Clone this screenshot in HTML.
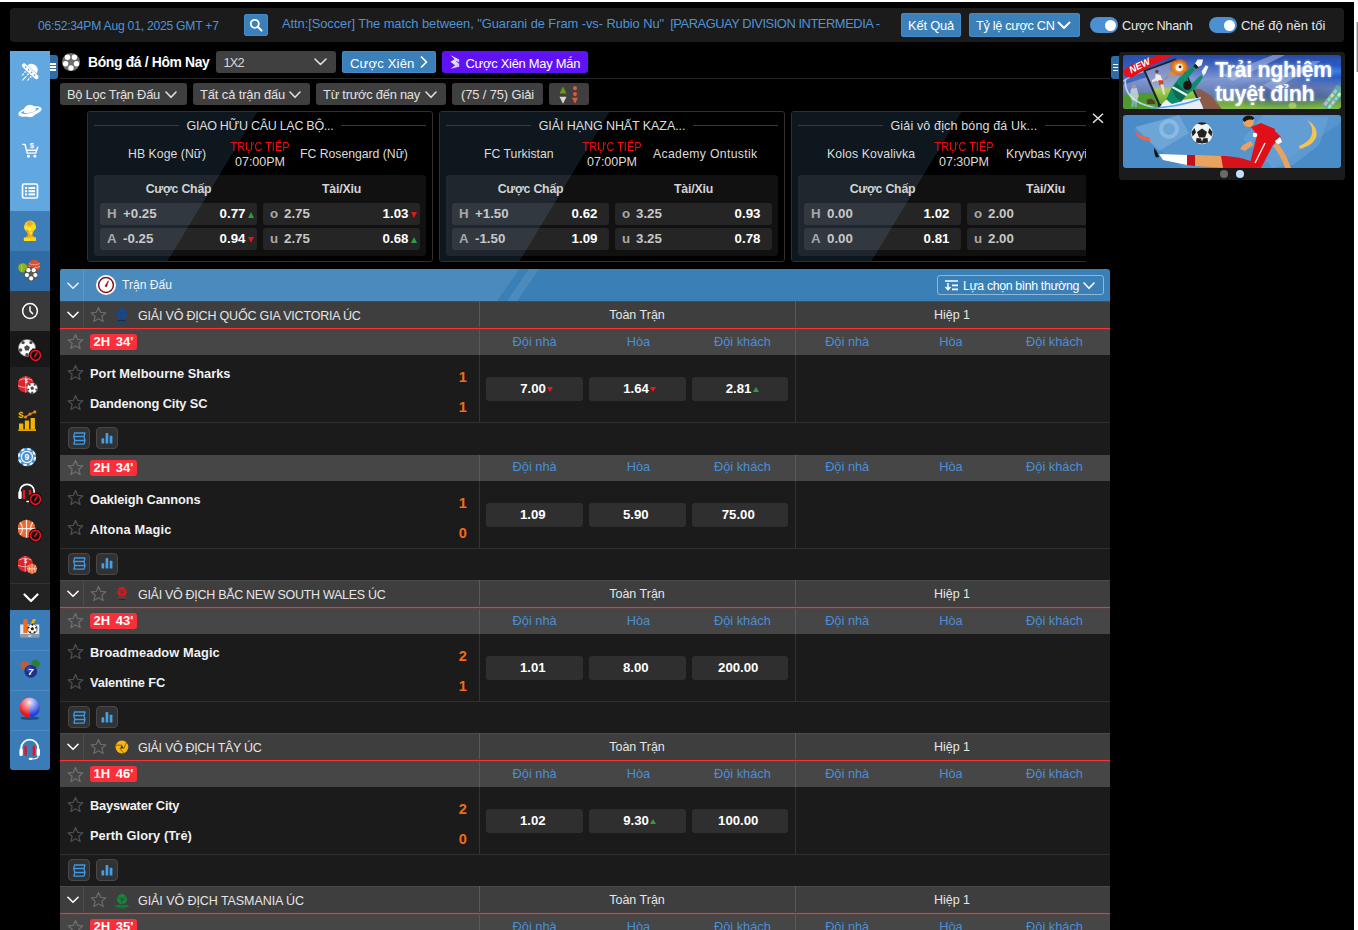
<!DOCTYPE html>
<html lang="vi">
<head>
<meta charset="utf-8">
<title>Bóng đá / Hôm Nay</title>
<style>
*{box-sizing:border-box;margin:0;padding:0}
html,body{width:1358px;height:930px;overflow:hidden;background:#fff}
body{font-family:"Liberation Sans",sans-serif;font-size:13px;color:#e6e6e6;position:relative}
#app{position:absolute;left:0;top:2px;width:1354px;height:928px;background:#000;overflow:hidden}
#sb{position:absolute;left:1356px;top:22px;width:2px;height:50px;background:linear-gradient(90deg,#d0d0d0 0,#d0d0d0 1px,#8c8c8c 1px,#8c8c8c 2px)}
.abs{position:absolute}
.t{position:absolute;white-space:nowrap;line-height:1}
/* top bar */
#top{position:absolute;left:10px;top:6px;width:1334px;height:34px;background:#1b1b1b;border-radius:4px}
.blue{color:#4e94d5}
.btn{position:absolute;border-radius:3px;background:#3b80b9;color:#fff;box-shadow:inset 0 0 0 1px #438acb}
.gbtn{position:absolute;border-radius:3px;background:#3f3f3f;color:#e2e2e2}
.tog{position:absolute;width:28px;height:16px;border-radius:8px;background:#4a90d2}
.tog i{position:absolute;right:2.500px;top:2.500px;width:11px;height:11px;border-radius:50%;background:#fff}
/* sidebar */
#side{position:absolute;left:10px;top:49px;width:40px;height:719px;border-radius:0 0 3px 3px;overflow:hidden;background:#222}
#side .it{position:absolute;left:0;width:40px;height:40px}
#side svg{position:absolute;left:8px;top:8px;width:24px;height:24px}

/* rows */
.chev{position:absolute}
#r2 .t,#r3 .t{font-size:13px}
.card{position:absolute;top:109px;width:346px;height:151px;border:1px solid #303030;border-radius:3px;overflow:hidden;background:#000}
.card .dg{position:absolute;left:-1px;top:-1px;width:172px;height:151px;background:#0f171e;clip-path:polygon(0 0,171px 0,80px 151px,0 151px)}
.card .ttl{position:absolute;left:0;top:6.500px;width:100%;text-align:center;font-size:12.500px;color:#dedede;line-height:15px;white-space:nowrap}
.card .ln{position:absolute;top:13px;height:1px;background:#3a3a3a}
.card .tm{position:absolute;top:34.500px;font-size:12.250px;color:#dcdcdc;line-height:15px;white-space:nowrap;text-align:center}
.card .live{position:absolute;left:0;width:100%;text-align:center;top:28px;font-size:12.500px;line-height:14px;color:#fa0a10;white-space:nowrap;transform:scaleX(.875)}
.card .time{position:absolute;left:0;width:100%;text-align:center;top:43px;font-size:12.500px;line-height:14px;color:#dcdcdc;white-space:nowrap}
.card .box{position:absolute;left:6px;top:63px;width:332px;height:81px;border-radius:3px;background:rgba(255,255,255,.065)}
.card .h{position:absolute;top:6.500px;font-size:12.300px;font-weight:700;color:#d4d4d4;line-height:15px;width:157px;text-align:center;white-space:nowrap;letter-spacing:-.2px}
.od{position:absolute;width:157px;height:22px;border-radius:3px;background:rgba(255,255,255,.085);font-size:13.300px;font-weight:700;line-height:22px;white-space:nowrap}
.od b{position:absolute;left:7px;color:#a8a8a8}
.od u{position:absolute;left:23px;color:#c8c8c8;text-decoration:none}
.od s{position:absolute;right:11.500px;color:#fff;text-decoration:none}
.od .up,.od .dn{position:absolute;right:3.300px;top:8.500px;width:0;height:0;border-left:3.500px solid transparent;border-right:3.500px solid transparent}
.od .up{border-bottom:6px solid #2e9e3e}
.od .dn{border-top:6px solid #e8131d}

/* table */
#th{position:absolute;left:60px;top:267px;width:1050px;height:32px;background:#3a80b6;border-radius:3px 3px 0 0;overflow:hidden}
#th .lg{position:absolute;left:0;top:0;width:460px;height:32px;background:#4b8abd;clip-path:polygon(0 0,459.500px 0,437px 32px,0 32px)}
#th .st{position:absolute;left:447px;top:0;width:40px;height:32px;background:#4b8abd;clip-path:polygon(22px 0,32px 0,10px 32px,0 32px)}
.lrow{position:absolute;left:60px;width:1050px;height:29px;z-index:2;background:linear-gradient(#4a4a4a 0,#4a4a4a 1px,#3e3e3e 1px,#3e3e3e 26px,#4a3c3c 26px,#4a3c3c 27px,#fa3232 27px,#fa3232 28px,#5c4343 28px,#5c4343 29px)}
.lrow .nm{position:absolute;left:78px;top:8px;font-size:12.500px;letter-spacing:-.2px;color:#e6e6e6;white-space:nowrap;line-height:14px}
.lrow .ct{position:absolute;top:7px;font-size:12.500px;color:#e6e6e6;white-space:nowrap;line-height:14px;width:100px;text-align:center}
.vd{position:absolute;top:0;width:1px;height:100%;background:#5a5a5a}
.lrow .vd{height:26px}
.mb{position:absolute;left:60px;width:1050px;height:126.500px;background:#1b1b1b}
.mb .tr{position:absolute;left:0;top:0;width:1050px;height:26px;background:#464646}
.mb .ch{position:absolute;top:5.500px;width:104px;text-align:center;font-size:12.800px;color:#4a8fd6;line-height:14px;white-space:nowrap}
.mb .bd{position:absolute;left:30px;top:5px;width:47px;height:16px;border-radius:3px;background:#fb2f39;color:#fff;font-weight:700;font-size:13px;line-height:16px;text-align:center;white-space:nowrap;word-spacing:2px}
.mb .tn{position:absolute;left:30px;font-size:12.800px;font-weight:700;color:#f2f2f2;white-space:nowrap;line-height:16px}
.mb .sc{position:absolute;left:392.800px;width:20px;text-align:center;font-size:14.500px;font-weight:700;color:#f26b14;line-height:16px}
.mb .oc{position:absolute;top:48px;width:97px;height:24px;border-radius:3px;background:#2f2f2f;color:#fff;font-weight:700;font-size:13.200px;line-height:24px;text-align:center;white-space:nowrap;padding-right:3.500px}
.mb .oc i{display:inline-block;width:0;height:0;border-left:3.300px solid transparent;border-right:3.300px solid transparent;margin-left:1.500px;margin-right:-8.100px;vertical-align:1px}
.mb .oc i.up{border-bottom:5.500px solid #2e9e3e}
.mb .oc i.dn{border-top:5.500px solid #f0141e}
.mb .hl{position:absolute;left:0;top:93px;width:1050px;height:1px;background:#303030}
.mb .v1{position:absolute;left:419px;top:26px;width:1px;height:67px;background:#333}
.mb .v2{position:absolute;left:735px;top:26px;width:1px;height:67px;background:#333}
.ib{position:absolute;top:98px;width:22px;height:22px;border:1px solid #484848;border-radius:4px;background:#323232}
.star{position:absolute;width:17px;height:17px}
</style>
</head>
<body>
<div id="sb"></div>
<div id="app">

<!-- TOP BAR -->
<div id="top">
  <span class="t blue" id="clock" style="letter-spacing:-0.259px;left:28px;top:11.500px;font-size:12.200px">06:52:34PM Aug 01, 2025 GMT +7</span>
  <div class="btn" style="left:234px;top:6px;width:24px;height:22px">
    <svg class="abs" style="left:5px;top:4px" width="14" height="14" viewBox="0 0 14 14"><circle cx="5.8" cy="5.8" r="4" fill="none" stroke="#fff" stroke-width="1.8"/><path d="M8.8 8.8 L12.6 12.6" stroke="#fff" stroke-width="2" stroke-linecap="round"/></svg>
  </div>
  <span class="t blue" id="marq" style="letter-spacing:-0.069px;left:272px;top:10px;font-size:12.900px">Attn:[Soccer] The match between, "Guarani de Fram -vs- Rubio Nu"</span><span class="t blue" id="marq2" style="letter-spacing:-0.451px;left:660.200px;top:10px;font-size:12.900px">[PARAGUAY DIVISION INTERMEDIA -</span>
  <div class="btn" style="left:891px;top:5px;width:60px;height:24px"><span class="t" id="kq" style="letter-spacing:-0.185px;left:7px;top:6.500px;font-size:12.900px">Kết Quả</span></div>
  <div class="btn" style="left:959px;top:5px;width:111px;height:24px"><span class="t" id="tl" style="letter-spacing:-0.298px;left:7px;top:6.500px;font-size:12.700px">Tỷ lệ cược CN</span>
    <svg class="abs" style="left:88px;top:8px" width="14" height="9" viewBox="0 0 14 9"><path d="M1.5 1.5 L7 7 L12.5 1.5" fill="none" stroke="#fff" stroke-width="2" stroke-linecap="round" stroke-linejoin="round"/></svg>
  </div>
  <div class="tog" style="left:1080px;top:9px"><i></i></div>
  <span class="t" id="cn" style="letter-spacing:-0.273px;left:1112px;top:11.800px;font-size:12.700px;color:#e8e8e8">Cược Nhanh</span>
  <div class="tog" style="left:1199px;top:9px"><i></i></div>
  <span class="t" id="cd" style="left:1231px;top:11.800px;font-size:12.96px;color:#e8e8e8">Chế độ nền tối</span>
</div>

<!-- SIDEBAR -->
<div id="side">
  <div class="it" style="top:0;background:#61a7e0">
    <svg viewBox="0 0 24 24"><g transform="rotate(43 12.600 11.700)"><path d="M6.600 9.700a6.300 6.300 0 0 1 12.400 0z" fill="#fff"/><rect x="2.200" y="10.100" width="21" height="4.500" rx="2.250" fill="#fff"/><g fill="#61a7e0"><circle cx="6.500" cy="12.350" r=".85"/><circle cx="10.500" cy="12.350" r=".85"/><circle cx="14.500" cy="12.350" r=".85"/><circle cx="18.500" cy="12.350" r=".85"/></g><path d="M8.300 15.500l1.200 2.200 1.200-2.200zM12 15.500l1.200 2.200 1.200-2.200zM15.700 15.500l1.200 2.200 1.200-2.200z" fill="#fff"/><g stroke="#fff" stroke-width="1.100" stroke-linecap="round"><path d="M9.500 18.800v1.800M13.200 18.800v5.200M16.900 18.800v1.800"/></g></g></svg>
  </div>
  <div class="it" style="top:40px;background:#61a7e0">
    <svg viewBox="0 0 24 24"><g fill="none" stroke="#fff"><ellipse cx="12" cy="12.500" rx="11" ry="3.600" transform="rotate(-14 12 12.500)" stroke-width="1.800"/></g><circle cx="12" cy="12" r="6.200" fill="#fff"/><path d="M4.500 13.800c3 2.200 11 .8 15-2.800" fill="none" stroke="#61a7e0" stroke-width="1.600"/><path d="M2 14.500c3 3 15 .5 20-4.500" fill="none" stroke="#fff" stroke-width="1.800" stroke-linecap="round"/></svg>
  </div>
  <div class="it" style="top:80px;background:#61a7e0">
    <svg viewBox="0 0 24 24"><g transform="translate(1.700 -.6) scale(.92)"><g fill="none" stroke="#fff" stroke-width="1.600" stroke-linecap="round" stroke-linejoin="round"><path d="M3.500 6.500h2.300l2.400 9.500h9.300l2-6.500"/><path d="M8 13h10"/></g><circle cx="9.500" cy="19.500" r="1.600" fill="#fff"/><circle cx="16.500" cy="19.500" r="1.600" fill="#fff"/><text x="13.300" y="10.500" font-size="8.500" font-weight="700" fill="#fff" text-anchor="middle" font-family="Liberation Sans,sans-serif">$</text></g></svg>
  </div>
  <div class="it" style="top:120px;background:#61a7e0">
    <svg viewBox="0 0 24 24"><rect x="4.500" y="5" width="15" height="14" rx="1.500" fill="none" stroke="#fff" stroke-width="1.700"/><g fill="#fff"><rect x="7" y="8" width="2" height="2"/><rect x="10.500" y="8" width="6.500" height="2"/><rect x="7" y="11.200" width="2" height="2"/><rect x="10.500" y="11.200" width="6.500" height="2"/><rect x="7" y="14.400" width="2" height="2"/><rect x="10.500" y="14.400" width="6.500" height="2"/></g></svg>
  </div>
  <div class="it" style="top:160px;background:#3d7db8">
    <svg viewBox="0 0 24 24"><path d="M8.300 11.500 10 17.500h4.200l1.700-6z" fill="#f0a51e"/><path d="M10.500 12 13 17 14.500 12.500z" fill="#ffe530"/><circle cx="12.100" cy="7.400" r="5.800" fill="#f7c81c"/><path d="M10 2.300l3 .2 1 3-2.500 1.500L9 5.500z" fill="#f0a51e"/><path d="M13.500 6.500l3.300-.8 1 3.500-2.300 2.300-2.500-1.500z" fill="#ffe21a"/><path d="M6.800 6l2.500 1.500.2 3L7 11.300 6.300 8.500z" fill="#ffe530"/><path d="M9.800 8l3 .5.700 2.700-2.500 1.500-2-1.700z" fill="#fff03a"/><path d="M7 11.300l2.500-.8 2 1.700-.5 1-2.500-.3z" fill="#f0a51e"/><path d="M8.500 17.300h7.200l1 1.300H7.500z" fill="#f5c21a"/><rect x="5.800" y="18.500" width="12.200" height="3.400" rx=".5" fill="#ffe01a"/><rect x="12" y="18.500" width="6" height="3.400" rx=".5" fill="#fcd20e"/></svg>
  </div>
  <div class="it" style="top:200px;background:#2f6ca6">
    <svg viewBox="0 0 24 24"><circle cx="4.800" cy="8.800" r="4.600" fill="#8ab317"/><path d="M3 5.500c1.500 2 1.500 5 0 7" stroke="#c5dc7a" stroke-width=".7" fill="none"/><circle cx="16.200" cy="6.800" r="6" fill="#d9512c"/><path d="M11 4.500c3 1.800 7.500 1.800 10.500 0M10.500 7.500c3 1.500 8.500 1.500 11.500 0" stroke="#f3b9a6" stroke-width=".8" fill="none"/><circle cx="13.1" cy="14.8" r="7" fill="#5a5a5a"/><circle cx="10.41" cy="11.18" r="2.08" fill="#fff"/><circle cx="15.72" cy="11.18" r="2.08" fill="#fff"/><circle cx="8.95" cy="16.11" r="2.08" fill="#fff"/><circle cx="17.33" cy="16.11" r="2.08" fill="#fff"/><circle cx="13.10" cy="19.42" r="2.08" fill="#fff"/></svg>
  </div>
  <div class="it" style="top:240px;background:#3a3a3a">
    <svg viewBox="0 0 24 24"><circle cx="12" cy="12" r="7.400" fill="none" stroke="#fff" stroke-width="1.500"/><path d="M12 7.800V12l2.600 2.600" fill="none" stroke="#fff" stroke-width="1.500" stroke-linecap="round" stroke-linejoin="round"/></svg>
  </div>
  <div class="it" style="top:280px;height:36px;background:#181818">
    <svg viewBox="0 0 26 26" style="left:8px;top:5px;width:26px;height:26px"><circle cx="9" cy="12" r="8.5" fill="#fafafa" stroke="#777" stroke-width=".700"/><g fill="#4a4a4a"><path d="M9.00 9.00L11.90 11.10L10.80 14.50L7.20 14.50L6.10 11.10z"/><circle cx="12.94" cy="6.58" r="1.70"/><circle cx="15.37" cy="14.07" r="1.70"/><circle cx="9.00" cy="18.70" r="1.70"/><circle cx="2.63" cy="14.07" r="1.70"/><circle cx="5.06" cy="6.58" r="1.70"/></g><circle cx="17.500" cy="19.300" r="6.800" fill="#0c0c0c"/><circle cx="17.500" cy="19.300" r="5" fill="none" stroke="#f0141e" stroke-width="1.700"/><path d="M16.800 20.300l2.300-3.400" stroke="#f0141e" stroke-width="1.600" stroke-linecap="round"/></svg>
  </div>
  <div class="it" style="top:316px;height:36px;background:#222">
    <svg viewBox="0 0 26 26" style="left:8px;top:5px;width:26px;height:26px"><circle cx="7.8" cy="12.4" r="8.2" fill="#d8262c"/><path d="M1.24 8.30q6.56 -3.28 13.12 0M0.01 13.63q7.79 3.69 15.58 0M7.8 4.200000000000001v16.4" stroke="#f7c1bd" stroke-width=".800" fill="none"/><text x="8.3" y="11.4" font-size="5" font-weight="700" fill="#fff" text-anchor="middle" font-family="Liberation Sans,sans-serif">$</text><circle cx="14.2" cy="16.2" r="5.4" fill="#fafafa" stroke="#555" stroke-width=".700"/><g fill="#4a4a4a"><path d="M14.20 14.29L16.04 15.63L15.34 17.79L13.06 17.79L12.36 15.63z"/><circle cx="16.70" cy="12.76" r="1.08"/><circle cx="18.25" cy="17.52" r="1.08"/><circle cx="14.20" cy="20.46" r="1.08"/><circle cx="10.15" cy="17.52" r="1.08"/><circle cx="11.70" cy="12.76" r="1.08"/></g></svg>
  </div>
  <div class="it" style="top:352px;height:36px;background:#222">
    <svg viewBox="0 0 26 26" style="left:8px;top:5px;width:26px;height:26px"><g fill="#f5b400"><rect x="1" y="15.500" width="4.300" height="6"/><rect x="6.800" y="12.500" width="4.300" height="9"/><rect x="12.600" y="10" width="4.300" height="11.500"/><rect x=".3" y="21.300" width="17.700" height="1.600"/></g><path d="M7.500 9 12 6 17 3.800" stroke="#e8841a" stroke-width="1.300" fill="none"/><g fill="#e8841a"><circle cx="7.500" cy="9" r="1.600"/><circle cx="12" cy="6" r="1.600"/><circle cx="16.800" cy="3.900" r="1.600"/></g><text x="3" y="10" font-size="9.500" font-weight="700" fill="#f5b400" text-anchor="middle" font-family="Liberation Sans,sans-serif">$</text></svg>
  </div>
  <div class="it" style="top:388px;height:36px;background:#222">
    <svg viewBox="0 0 26 26" style="left:8px;top:5px;width:26px;height:26px"><circle cx="8.900" cy="13" r="9.300" fill="#4a90d2"/><circle cx="8.900" cy="13" r="8.100" fill="none" stroke="#eaf2fb" stroke-width="2" stroke-dasharray="3.400 3"/><circle cx="8.900" cy="13" r="6.200" fill="#f4f8fc"/><circle cx="8.900" cy="13" r="4.900" fill="#4a90d2"/><text x="8.900" y="16" font-size="8.500" font-weight="700" fill="#fff" text-anchor="middle" font-family="Liberation Sans,sans-serif">9</text></svg>
  </div>
  <div class="it" style="top:424px;height:36px;background:#222">
    <svg viewBox="0 0 26 26" style="left:8px;top:5px;width:26px;height:26px"><path d="M1.800 15V11.500a7.200 7.200 0 0 1 14.400 0V14" fill="none" stroke="#fff" stroke-width="1.700"/><rect x=".3" y="11" width="3.400" height="8" rx="1.500" fill="#fff"/><rect x="4.800" y="10" width="2.200" height="9" fill="#f0141e"/><rect x="11" y="10" width="2.200" height="5" fill="#f0141e"/><path d="M9 21.500h2" stroke="#fff" stroke-width="1.500" stroke-linecap="round"/><circle cx="17.500" cy="19.300" r="6.800" fill="#0c0c0c"/><circle cx="17.500" cy="19.300" r="5" fill="none" stroke="#f0141e" stroke-width="1.700"/><path d="M16.800 20.300l2.300-3.400" stroke="#f0141e" stroke-width="1.600" stroke-linecap="round"/></svg>
  </div>
  <div class="it" style="top:460px;height:36px;background:#222">
    <svg viewBox="0 0 26 26" style="left:8px;top:5px;width:26px;height:26px"><circle cx="8.5" cy="12.7" r="9" fill="#ea6a36"/><path d="M-0.5 12.7h18M8.5 3.6999999999999993v18M2.20 6.40q4.50 6.30 0 12.60M14.80 6.40q-4.50 6.30 0 12.60" stroke="#fde6da" stroke-width="1.17" fill="none"/><circle cx="17.500" cy="19.300" r="6.800" fill="#0c0c0c"/><circle cx="17.500" cy="19.300" r="5" fill="none" stroke="#f0141e" stroke-width="1.700"/><path d="M16.800 20.300l2.300-3.400" stroke="#f0141e" stroke-width="1.600" stroke-linecap="round"/></svg>
  </div>
  <div class="it" style="top:496px;height:36px;background:#222">
    <svg viewBox="0 0 26 26" style="left:8px;top:5px;width:26px;height:26px"><circle cx="7.2" cy="11.9" r="7.8" fill="#d8262c"/><path d="M0.96 8.00q6.24 -3.12 12.48 0M-0.21 13.07q7.41 3.51 14.82 0M7.2 4.1000000000000005v15.6" stroke="#f7c1bd" stroke-width=".800" fill="none"/><text x="7.7" y="10.9" font-size="5" font-weight="700" fill="#fff" text-anchor="middle" font-family="Liberation Sans,sans-serif">$</text><circle cx="14" cy="16.8" r="5" fill="#ea6a36"/><path d="M9 16.8h10M14 11.8v10M10.50 13.30q2.50 3.50 0 7.00M17.50 13.30q-2.50 3.50 0 7.00" stroke="#fde6da" stroke-width="0.70" fill="none"/></svg>
  </div>
  <div class="it" style="top:532px;height:27px;background:#222;border-top:1px solid #333">
    <svg viewBox="0 0 16 10" style="left:13px;top:9px;width:16px;height:10px"><path d="M1.500 1.500 8 8 14.500 1.500" fill="none" stroke="#fff" stroke-width="2.200" stroke-linecap="round" stroke-linejoin="round"/></svg>
  </div>
  <div class="it" style="top:559px;background:#3a7cb8">
    <svg viewBox="0 0 24 24" style="left:7.300px;top:6.300px;width:25.400px;height:25.400px"><rect x="3" y="8" width="18" height="11" fill="#dfe6ee"/><rect x="3" y="17" width="18" height="3.500" fill="#8e9aa8"/><rect x="10.500" y="18.400" width="3" height=".9" fill="#fff"/><path d="M6 3h4v13H6z" fill="#f26a1b"/><path d="M10 12 15 3h3l-5 9z" fill="#f7b500"/><circle cx="14.500" cy="12" r="4.500" fill="#fff" stroke="#333" stroke-width=".7"/><g fill="#222"><path d="M14.500 10.300l1.600 1.200-.6 1.900h-2l-.6-1.900z"/><circle cx="14.500" cy="8.300" r=".9"/><circle cx="11" cy="11" r=".9"/><circle cx="18" cy="11" r=".9"/><circle cx="12.400" cy="15.300" r=".9"/><circle cx="16.600" cy="15.300" r=".9"/></g></svg>
  </div>
  <div class="it" style="top:599px;background:#3a7cb8;box-shadow:inset 0 1px 0 rgba(255,255,255,.1)">
    <svg viewBox="0 0 24 24" style="left:7.300px;top:6.300px;width:25.400px;height:25.400px"><circle cx="7.500" cy="9" r="4.300" fill="#b5623a"/><circle cx="17.500" cy="7.500" r="4" fill="#2e7d32"/><circle cx="13" cy="14.500" r="6" fill="#1e2f8f"/><circle cx="11.500" cy="12.500" r="2.500" fill="#3d52c4" opacity=".7"/><text x="13" y="18" font-size="9" font-weight="700" fill="#fff" text-anchor="middle" font-family="Liberation Sans,sans-serif" font-style="italic">7</text></svg>
  </div>
  <div class="it" style="top:639px;background:#3a7cb8;box-shadow:inset 0 1px 0 rgba(255,255,255,.1)">
    <svg viewBox="0 0 24 24" style="left:7.300px;top:6.300px;width:25.400px;height:25.400px"><defs><radialGradient id="gl" cx=".5" cy=".25" r=".6"><stop offset="0" stop-color="#fff" stop-opacity=".9"/><stop offset="1" stop-color="#fff" stop-opacity="0"/></radialGradient><clipPath id="cb"><circle cx="12" cy="11" r="9.500"/></clipPath></defs><ellipse cx="12" cy="21" rx="9" ry="1.600" fill="#1d4e80"/><g clip-path="url(#cb)"><rect x="2" y="1" width="10" height="20" fill="#e8131d"/><rect x="12" y="1" width="10" height="20" fill="#1f3fe0"/><rect x="2" y="1" width="20" height="20" fill="url(#gl)"/></g></svg>
  </div>
  <div class="it" style="top:679px;background:#3a7cb8;box-shadow:inset 0 1px 0 rgba(255,255,255,.1)">
    <svg viewBox="0 0 24 24" style="left:7.300px;top:6.300px;width:25.400px;height:25.400px"><path d="M4 15V11.500a8 8 0 0 1 16 0V15" fill="none" stroke="#fff" stroke-width="1.700"/><rect x="2.300" y="11.500" width="3.200" height="7.500" rx="1.500" fill="#fff"/><rect x="18.500" y="11.500" width="3.200" height="7.500" rx="1.500" fill="#fff"/><rect x="7" y="9.500" width="2.200" height="9" fill="#e8131d"/><rect x="14.800" y="9.500" width="2.200" height="9" fill="#e8131d"/><path d="M20 19c0 2-2 2.700-5 2.700" fill="none" stroke="#fff" stroke-width="1"/><rect x="11" y="20.500" width="4" height="2.200" rx="1.100" fill="#fff"/></svg>
  </div>
</div>
<div class="abs" style="left:50px;top:53px;width:8px;height:24px;background:#2f6ca6;border-radius:0 3px 3px 0">
  <i class="abs" style="left:0;top:8px;width:6px;height:2px;background:#fff"></i><i class="abs" style="left:0;top:11px;width:6px;height:2px;background:#fff"></i><i class="abs" style="left:0;top:14px;width:6px;height:2px;background:#fff"></i>
</div>

<!-- ROW 2 -->
<div id="r2">
  <svg class="abs" style="left:61px;top:49.900px" width="20" height="20" viewBox="0 0 20 20"><circle cx="10" cy="10" r="9.100" fill="#6f6f6f"/><circle cx="6.50" cy="5.30" r="2.700" fill="#fff"/><circle cx="13.40" cy="5.30" r="2.700" fill="#fff"/><circle cx="4.60" cy="11.70" r="2.700" fill="#fff"/><circle cx="15.50" cy="11.70" r="2.700" fill="#fff"/><circle cx="10.00" cy="16.00" r="2.700" fill="#fff"/></svg>
  <span class="t" id="ttl" style="letter-spacing:-0.344px;left:88px;top:53.500px;font-size:13.900px;font-weight:700;color:#fff">Bóng đá / Hôm Nay</span>
  <div class="gbtn" style="left:216px;top:49px;width:120px;height:22px;background:#404040"><span class="t" id="x12" style="letter-spacing:-0.794px;font-size:12.800px;left:7.500px;top:5.800px;color:#d8d8d8">1X2</span>
    <svg class="abs" style="left:98px;top:7px" width="13" height="8" viewBox="0 0 13 8"><path d="M1 1 6.500 6.500 12 1" fill="none" stroke="#e0e0e0" stroke-width="1.600" stroke-linecap="round" stroke-linejoin="round"/></svg></div>
  <div class="btn" style="left:342px;top:49px;width:94px;height:22px"><span class="t" id="cx" style="letter-spacing:0.144px;font-size:13.100px;left:8px;top:6px">Cược Xiên</span>
    <svg class="abs" style="left:78px;top:5px" width="8" height="12" viewBox="0 0 8 12"><path d="M1.500 1 6.500 6 1.500 11" fill="none" stroke="#fff" stroke-width="1.700" stroke-linecap="round" stroke-linejoin="round"/></svg></div>
  <div class="btn" style="left:442px;top:49px;width:146px;height:22px;background:#5f12f4;box-shadow:none"><span class="t" id="cxm" style="letter-spacing:-0.248px;font-size:12.900px;left:23.500px;top:6.500px">Cược Xiên May Mắn</span>
    <svg class="abs" style="left:7.500px;top:4px" width="10" height="14" viewBox="0 0 10 14"><defs><linearGradient id="pz" x1="0" y1="0" x2="1" y2="1"><stop offset="0" stop-color="#fff"/><stop offset="1" stop-color="#cdb4ff"/></linearGradient></defs><path d="M.5.300 9.200 4.600V7.300L4.800 5.300 9.200 8.800V11.800L.8 13.700 5 10.300 .5 6.800 4.800 4.200z" fill="url(#pz)"/></svg></div>
</div>
<div class="abs" style="left:60px;top:76px;width:1050px;height:1px;background:#262626"></div>
<!-- ROW 3 -->
<div id="r3">
  <div class="gbtn" style="left:60px;top:81px;width:127px;height:22px"><span class="t" id="f1" style="letter-spacing:-0.25px;font-size:12.900px;left:7px;top:6px">Bộ Lọc Trận Đấu</span>
    <svg class="abs" style="left:105px;top:8px" width="12" height="8" viewBox="0 0 12 8"><path d="M1 1 6 6.300 11 1" fill="none" stroke="#e0e0e0" stroke-width="1.600" stroke-linecap="round" stroke-linejoin="round"/></svg></div>
  <div class="gbtn" style="left:193px;top:81px;width:117px;height:22px"><span class="t" id="f2" style="letter-spacing:-0.101px;font-size:12.900px;left:7px;top:6px">Tất cả trận đấu</span>
    <svg class="abs" style="left:96px;top:8px" width="12" height="8" viewBox="0 0 12 8"><path d="M1 1 6 6.300 11 1" fill="none" stroke="#e0e0e0" stroke-width="1.600" stroke-linecap="round" stroke-linejoin="round"/></svg></div>
  <div class="gbtn" style="left:316px;top:81px;width:130px;height:22px"><span class="t" id="f3" style="letter-spacing:-0.247px;font-size:12.900px;left:7px;top:6px">Từ trước đến nay</span>
    <svg class="abs" style="left:109px;top:8px" width="12" height="8" viewBox="0 0 12 8"><path d="M1 1 6 6.300 11 1" fill="none" stroke="#e0e0e0" stroke-width="1.600" stroke-linecap="round" stroke-linejoin="round"/></svg></div>
  <div class="gbtn" style="left:452px;top:81px;width:91px;height:22px"><span class="t" id="f4" style="letter-spacing:-0.108px;font-size:12.900px;left:9px;top:6px">(75 / 75) Giải</span></div>
  <div class="gbtn" style="left:549px;top:81px;width:40px;height:22px">
    <svg class="abs" style="left:9px;top:2.800px" width="22" height="18.300" viewBox="0 0 22 17" preserveAspectRatio="none"><path d="M5 .5 8.500 7h-7z" fill="#6b9a12"/><path d="M5 16.500 8.500 10h-7z" fill="#d8d8d8"/><circle cx="17" cy="2" r="2" fill="#e2583a"/><circle cx="17" cy="7.500" r="2" fill="#e2583a"/><path d="M17 16.500 20 11h-6z" fill="#e2583a"/></svg></div>
</div>
<div class="abs" id="car" style="left:87px;top:0;width:999px;height:270px;overflow:hidden">
<div class="card" style="left:0px">
  <i class="dg"></i><div class="ttl" id="c1t" style="letter-spacing:-0.281px">GIAO HỮU CÂU LẠC BỘ...</div><i class="ln" style="left:6px;width:85px"></i><i class="ln" style="left:253px;width:85px"></i>
  <span class="tm" id="c1h" style="letter-spacing:0.047px;left:40px">HB Koge (Nữ)</span><div class="live">TRỰC TIẾP</div><div class="time">07:00PM</div><span class="tm" id="c1a" style="letter-spacing:-0.022px;left:212px">FC Rosengard (Nữ)</span>
  <div class="box"><div class="h" style="left:6px">Cược Chấp</div><div class="h" style="left:169px">Tài/Xỉu</div>
    <div class="od" style="left:6px;top:28px"><b>H</b><u>+0.25</u><s>0.77</s><i class="up"></i></div><div class="od" style="left:169px;top:28px"><b>o</b><u style="left:21px">2.75</u><s>1.03</s><i class="dn"></i></div>
    <div class="od" style="left:6px;top:53px"><b>A</b><u>-0.25</u><s>0.94</s><i class="dn"></i></div><div class="od" style="left:169px;top:53px"><b>u</b><u style="left:21px">2.75</u><s>0.68</s><i class="up"></i></div>
  </div>
</div>
<div class="card" style="left:352px">
  <i class="dg"></i><div class="ttl" id="c2t" style="letter-spacing:-0.078px">GIẢI HẠNG NHẤT KAZA...</div><i class="ln" style="left:6px;width:85px"></i><i class="ln" style="left:253px;width:85px"></i>
  <span class="tm" id="c2h" style="letter-spacing:0.014px;left:44px">FC Turkistan</span><div class="live">TRỰC TIẾP</div><div class="time">07:00PM</div><span class="tm" id="c2a" style="letter-spacing:0.312px;left:213px">Academy Ontustik</span>
  <div class="box"><div class="h" style="left:6px">Cược Chấp</div><div class="h" style="left:169px">Tài/Xỉu</div>
    <div class="od" style="left:6px;top:28px"><b>H</b><u>+1.50</u><s>0.62</s></div><div class="od" style="left:169px;top:28px"><b>o</b><u style="left:21px">3.25</u><s>0.93</s></div>
    <div class="od" style="left:6px;top:53px"><b>A</b><u>-1.50</u><s>1.09</s></div><div class="od" style="left:169px;top:53px"><b>u</b><u style="left:21px">3.25</u><s>0.78</s></div>
  </div>
</div>
<div class="card" style="left:704px">
  <i class="dg"></i><div class="ttl" id="c3t" style="letter-spacing:0.148px">Giải vô địch bóng đá Uk...</div><i class="ln" style="left:6px;width:85px"></i><i class="ln" style="left:253px;width:85px"></i>
  <span class="tm" id="c3h" style="letter-spacing:0.121px;left:35px">Kolos Kovalivka</span><div class="live">TRỰC TIẾP</div><div class="time">07:30PM</div><span class="tm" id="c3a" style="left:214px">Kryvbas Kryvyi Rih</span>
  <div class="box"><div class="h" style="left:6px">Cược Chấp</div><div class="h" style="left:169px">Tài/Xỉu</div>
    <div class="od" style="left:6px;top:28px"><b>H</b><u>0.00</u><s>1.02</s></div><div class="od" style="left:169px;top:28px"><b>o</b><u style="left:21px">2.00</u></div>
    <div class="od" style="left:6px;top:53px"><b>A</b><u>0.00</u><s>0.81</s></div><div class="od" style="left:169px;top:53px"><b>u</b><u style="left:21px">2.00</u></div>
  </div>
</div>
</div>
<svg class="abs" style="left:1091.500px;top:111px" width="12" height="10.500" viewBox="0 0 12 11" preserveAspectRatio="none"><path d="M1 .8 11 10.200M11 .8 1 10.200" stroke="#e4e4e4" stroke-width="1.500"/></svg>

<!-- TABLE -->
<div id="th"><i class="lg"></i><i class="st"></i><svg class="abs" style="left:6.500px;top:13px" width="12" height="8" viewBox="0 0 13 8"><path d="M1 1 6.500 6.500 12 1" fill="none" stroke="#e8f1fa" stroke-width="1.700" stroke-linecap="round" stroke-linejoin="round"/></svg><i class="vd" style="left:23px;background:#5c97c6"></i><svg class="abs" style="left:36px;top:6px" width="20" height="20" viewBox="0 0 20 20"><circle cx="10" cy="10" r="10" fill="#fff"/><circle cx="10" cy="10" r="7.400" fill="none" stroke="#8e1016" stroke-width="1.500"/><path d="M8.900 11.200 12.400 5.800 10.700 11.800z" fill="#8e1016" stroke="#8e1016" stroke-width=".6" stroke-linejoin="round"/></svg><span class="t" id="td" style="left:62px;top:10px;font-size:12.1px;color:#f0f4f8">Trận Đấu</span><div class="abs" style="left:877px;top:6px;width:167px;height:20px;border:1px solid rgba(210,228,245,.55);border-radius:3px"><svg class="abs" style="left:6.500px;top:4px" width="13" height="11" viewBox="0 0 13 11"><g stroke="#fff" fill="none"><path d="M0 1h13" stroke-width="1.700"/><path d="M7 5.300h6M7 9.300h6" stroke-width="1.700"/><path d="M3 3v6.500M.5 7 3 9.700 5.500 7" stroke-width="1.500"/></g></svg><span class="t" id="lc" style="letter-spacing:-0.35px;left:25px;top:3.500px;font-size:12.300px;color:#fff">Lựa chọn bình thường</span><svg class="abs" style="left:144.500px;top:6px" width="12" height="8" viewBox="0 0 12 8"><path d="M1 1 6 6.300 11 1" fill="none" stroke="#fff" stroke-width="1.600" stroke-linecap="round" stroke-linejoin="round"/></svg></div></div>
<div class="lrow" style="top:299px;background-position:0 0"><svg class="abs" style="left:6.500px;top:10px" width="12" height="8" viewBox="0 0 13 8"><path d="M1 1 6.500 6.500 12 1" fill="none" stroke="#fff" stroke-width="1.700" stroke-linecap="round" stroke-linejoin="round"/></svg><i class="vd" style="left:23px;background:#4c4c4c"></i><svg class="star" style="left:30.300px;top:5.300px" viewBox="0 0 16 16"><path d="M8 1.300 10 5.900 15 6.400 11.200 9.700 12.300 14.600 8 12 3.700 14.600 4.800 9.700 1 6.400 6 5.900z" fill="none" stroke="#6a6a6a" stroke-width="1.200" stroke-linejoin="round"/></svg><svg class="abs" style="left:55px;top:5px" width="14" height="18" viewBox="0 0 14 18"><circle cx="6.8" cy="7.8" r="5.4" fill="#0c4a9a"/><path d="M6.80 6.16L8.48 9.07L5.12 9.07z" fill="#3e3e3e"/><path d="M6.80 6.16L1.58 6.40" stroke="#3e3e3e" stroke-width=".800" opacity=".8"/><path d="M8.48 9.07L10.62 3.98" stroke="#3e3e3e" stroke-width=".800" opacity=".8"/><path d="M5.12 9.07L8.20 13.02" stroke="#3e3e3e" stroke-width=".800" opacity=".8"/><rect x="2.500" y="14.200" width="8.500" height=".9" fill="#1d2a3a"/><rect x="2.500" y="15.800" width="8.500" height="1.100" fill="#0c4a9a"/></svg><span class="nm" id="l1" style="letter-spacing:-0.19px">GIẢI VÔ ĐỊCH QUỐC GIA VICTORIA ÚC</span><i class="vd" style="left:419px"></i><i class="vd" style="left:735px"></i><span class="ct" style="left:527px">Toàn Trận</span><span class="ct" style="left:842px">Hiệp 1</span></div>
<div class="mb" style="top:327px"><div class="tr"><svg class="star" style="left:6.500px;top:4.300px" viewBox="0 0 16 16"><path d="M8 1.300 10 5.900 15 6.400 11.200 9.700 12.300 14.600 8 12 3.700 14.600 4.800 9.700 1 6.400 6 5.900z" fill="none" stroke="#6e6e6e" stroke-width="1.200" stroke-linejoin="round"/></svg><span class="bd">2H 34'</span><i class="vd" style="left:419px"></i><i class="vd" style="left:735px"></i><span class="ch" style="left:422.6px">Đội nhà</span><span class="ch" style="left:526.5px">Hòa</span><span class="ch" style="left:630.4px">Đội khách</span><span class="ch" style="left:735.2px">Đội nhà</span><span class="ch" style="left:839px">Hòa</span><span class="ch" style="left:942.5px">Đội khách</span></div><svg class="star" style="left:6.500px;top:34.500px" viewBox="0 0 16 16"><path d="M8 1.300 10 5.900 15 6.400 11.200 9.700 12.300 14.600 8 12 3.700 14.600 4.800 9.700 1 6.400 6 5.900z" fill="none" stroke="#4e4e4e" stroke-width="1.200" stroke-linejoin="round"/></svg><svg class="star" style="left:6.500px;top:64.500px" viewBox="0 0 16 16"><path d="M8 1.300 10 5.900 15 6.400 11.200 9.700 12.300 14.600 8 12 3.700 14.600 4.800 9.700 1 6.400 6 5.900z" fill="none" stroke="#4e4e4e" stroke-width="1.200" stroke-linejoin="round"/></svg><span class="tn" id="m1a" style="letter-spacing:0.019px;top:37px">Port Melbourne Sharks</span><span class="tn" id="m1b" style="letter-spacing:-0.127px;top:67px">Dandenong City SC</span><span class="sc" style="top:40px">1</span><span class="sc" style="top:70px">1</span><div class="oc" style="left:426px">7.00<i class="dn"></i></div><div class="oc" style="left:529px">1.64<i class="dn"></i></div><div class="oc" style="left:632px;width:96px">2.81<i class="up"></i></div><i class="v1"></i><i class="v2"></i><i class="hl"></i><div class="ib" style="left:8px"><svg class="abs" style="left:3.500px;top:3.500px" width="13" height="13" viewBox="0 0 13 13"><g fill="none" stroke="#3f98e4" stroke-width="1.300" stroke-linejoin="round"><path d="M1.500 1H12L11 4.600 12 8.500 11 12.100H.8L1.800 8.500 .8 4.600z"/><path d="M.8 4.600H11M1.800 8.500H12" stroke-width="1.500"/></g></svg></div><div class="ib" style="left:36px"><svg class="abs" style="left:3.500px;top:3.500px" width="13" height="13" viewBox="0 0 13 13"><g fill="#42a0e6"><rect x=".5" y="6.300" width="2.700" height="5.300" rx=".6"/><rect x="4.600" y="1.100" width="2.700" height="10.500" rx=".6"/><rect x="8.700" y="3.700" width="2.700" height="7.900" rx=".6"/></g></svg></div></div>
<div class="mb" style="top:452.700px"><div class="tr"><svg class="star" style="left:6.500px;top:4.300px" viewBox="0 0 16 16"><path d="M8 1.300 10 5.900 15 6.400 11.200 9.700 12.300 14.600 8 12 3.700 14.600 4.800 9.700 1 6.400 6 5.900z" fill="none" stroke="#6e6e6e" stroke-width="1.200" stroke-linejoin="round"/></svg><span class="bd">2H 34'</span><i class="vd" style="left:419px"></i><i class="vd" style="left:735px"></i><span class="ch" style="left:422.6px">Đội nhà</span><span class="ch" style="left:526.5px">Hòa</span><span class="ch" style="left:630.4px">Đội khách</span><span class="ch" style="left:735.2px">Đội nhà</span><span class="ch" style="left:839px">Hòa</span><span class="ch" style="left:942.5px">Đội khách</span></div><svg class="star" style="left:6.500px;top:34.500px" viewBox="0 0 16 16"><path d="M8 1.300 10 5.900 15 6.400 11.200 9.700 12.300 14.600 8 12 3.700 14.600 4.800 9.700 1 6.400 6 5.900z" fill="none" stroke="#4e4e4e" stroke-width="1.200" stroke-linejoin="round"/></svg><svg class="star" style="left:6.500px;top:64.500px" viewBox="0 0 16 16"><path d="M8 1.300 10 5.900 15 6.400 11.200 9.700 12.300 14.600 8 12 3.700 14.600 4.800 9.700 1 6.400 6 5.900z" fill="none" stroke="#4e4e4e" stroke-width="1.200" stroke-linejoin="round"/></svg><span class="tn" id="m2a" style="letter-spacing:-0.122px;top:37px">Oakleigh Cannons</span><span class="tn" id="m2b" style="letter-spacing:0.163px;top:67px">Altona Magic</span><span class="sc" style="top:40px">1</span><span class="sc" style="top:70px">0</span><div class="oc" style="left:426px">1.09</div><div class="oc" style="left:529px">5.90</div><div class="oc" style="left:632px;width:96px">75.00</div><i class="v1"></i><i class="v2"></i><i class="hl"></i><div class="ib" style="left:8px"><svg class="abs" style="left:3.500px;top:3.500px" width="13" height="13" viewBox="0 0 13 13"><g fill="none" stroke="#3f98e4" stroke-width="1.300" stroke-linejoin="round"><path d="M1.500 1H12L11 4.600 12 8.500 11 12.100H.8L1.800 8.500 .8 4.600z"/><path d="M.8 4.600H11M1.800 8.500H12" stroke-width="1.500"/></g></svg></div><div class="ib" style="left:36px"><svg class="abs" style="left:3.500px;top:3.500px" width="13" height="13" viewBox="0 0 13 13"><g fill="#42a0e6"><rect x=".5" y="6.300" width="2.700" height="5.300" rx=".6"/><rect x="4.600" y="1.100" width="2.700" height="10.500" rx=".6"/><rect x="8.700" y="3.700" width="2.700" height="7.900" rx=".6"/></g></svg></div></div>
<div class="lrow" style="top:578px"><svg class="abs" style="left:6.500px;top:10px" width="12" height="8" viewBox="0 0 13 8"><path d="M1 1 6.500 6.500 12 1" fill="none" stroke="#fff" stroke-width="1.700" stroke-linecap="round" stroke-linejoin="round"/></svg><i class="vd" style="left:23px;background:#4c4c4c"></i><svg class="star" style="left:30.300px;top:5.300px" viewBox="0 0 16 16"><path d="M8 1.300 10 5.900 15 6.400 11.200 9.700 12.300 14.600 8 12 3.700 14.600 4.800 9.700 1 6.400 6 5.900z" fill="none" stroke="#6a6a6a" stroke-width="1.200" stroke-linejoin="round"/></svg><svg class="abs" style="left:55px;top:5px" width="14" height="18" viewBox="0 0 14 18"><circle cx="6.9" cy="6.8" r="4.8" fill="#d8181e"/><path d="M6.90 5.37L8.40 7.96L5.40 7.96z" fill="#3e3e3e"/><path d="M6.90 5.37L2.26 5.56" stroke="#3e3e3e" stroke-width=".800" opacity=".8"/><path d="M8.40 7.96L10.29 3.41" stroke="#3e3e3e" stroke-width=".800" opacity=".8"/><path d="M5.40 7.96L8.14 11.44" stroke="#3e3e3e" stroke-width=".800" opacity=".8"/><rect x="3" y="12.100" width="8" height="1.100" fill="#d8181e"/><rect x="4" y="13.900" width="6" height="1.100" fill="#2a2a2a"/></svg><span class="nm" id="l2" style="letter-spacing:-0.3px">GIẢI VÔ ĐỊCH BẮC NEW SOUTH WALES ÚC</span><i class="vd" style="left:419px"></i><i class="vd" style="left:735px"></i><span class="ct" style="left:527px">Toàn Trận</span><span class="ct" style="left:842px">Hiệp 1</span></div>
<div class="mb" style="top:606.200px"><div class="tr"><svg class="star" style="left:6.500px;top:4.300px" viewBox="0 0 16 16"><path d="M8 1.300 10 5.900 15 6.400 11.200 9.700 12.300 14.600 8 12 3.700 14.600 4.800 9.700 1 6.400 6 5.900z" fill="none" stroke="#6e6e6e" stroke-width="1.200" stroke-linejoin="round"/></svg><span class="bd">2H 43'</span><i class="vd" style="left:419px"></i><i class="vd" style="left:735px"></i><span class="ch" style="left:422.6px">Đội nhà</span><span class="ch" style="left:526.5px">Hòa</span><span class="ch" style="left:630.4px">Đội khách</span><span class="ch" style="left:735.2px">Đội nhà</span><span class="ch" style="left:839px">Hòa</span><span class="ch" style="left:942.5px">Đội khách</span></div><svg class="star" style="left:6.500px;top:34.500px" viewBox="0 0 16 16"><path d="M8 1.300 10 5.900 15 6.400 11.200 9.700 12.300 14.600 8 12 3.700 14.600 4.800 9.700 1 6.400 6 5.900z" fill="none" stroke="#4e4e4e" stroke-width="1.200" stroke-linejoin="round"/></svg><svg class="star" style="left:6.500px;top:64.500px" viewBox="0 0 16 16"><path d="M8 1.300 10 5.900 15 6.400 11.200 9.700 12.300 14.600 8 12 3.700 14.600 4.800 9.700 1 6.400 6 5.900z" fill="none" stroke="#4e4e4e" stroke-width="1.200" stroke-linejoin="round"/></svg><span class="tn" id="m3a" style="letter-spacing:0.106px;top:37px">Broadmeadow Magic</span><span class="tn" id="m3b" style="letter-spacing:-0.151px;top:67px">Valentine FC</span><span class="sc" style="top:40px">2</span><span class="sc" style="top:70px">1</span><div class="oc" style="left:426px">1.01</div><div class="oc" style="left:529px">8.00</div><div class="oc" style="left:632px;width:96px">200.00</div><i class="v1"></i><i class="v2"></i><i class="hl"></i><div class="ib" style="left:8px"><svg class="abs" style="left:3.500px;top:3.500px" width="13" height="13" viewBox="0 0 13 13"><g fill="none" stroke="#3f98e4" stroke-width="1.300" stroke-linejoin="round"><path d="M1.500 1H12L11 4.600 12 8.500 11 12.100H.8L1.800 8.500 .8 4.600z"/><path d="M.8 4.600H11M1.800 8.500H12" stroke-width="1.500"/></g></svg></div><div class="ib" style="left:36px"><svg class="abs" style="left:3.500px;top:3.500px" width="13" height="13" viewBox="0 0 13 13"><g fill="#42a0e6"><rect x=".5" y="6.300" width="2.700" height="5.300" rx=".6"/><rect x="4.600" y="1.100" width="2.700" height="10.500" rx=".6"/><rect x="8.700" y="3.700" width="2.700" height="7.900" rx=".6"/></g></svg></div></div>
<div class="lrow" style="top:731px"><svg class="abs" style="left:6.500px;top:10px" width="12" height="8" viewBox="0 0 13 8"><path d="M1 1 6.500 6.500 12 1" fill="none" stroke="#fff" stroke-width="1.700" stroke-linecap="round" stroke-linejoin="round"/></svg><i class="vd" style="left:23px;background:#4c4c4c"></i><svg class="star" style="left:30.300px;top:5.300px" viewBox="0 0 16 16"><path d="M8 1.300 10 5.900 15 6.400 11.200 9.700 12.300 14.600 8 12 3.700 14.600 4.800 9.700 1 6.400 6 5.900z" fill="none" stroke="#6a6a6a" stroke-width="1.200" stroke-linejoin="round"/></svg><svg class="abs" style="left:54px;top:5px" width="16" height="18" viewBox="0 0 16 18"><circle cx="7.9" cy="9" r="6.4" fill="#fdb40e"/><path d="M7.90 7.00L9.90 10.45L5.90 10.45z" fill="#3e3e3e"/><path d="M7.90 7.00L1.72 7.34" stroke="#3e3e3e" stroke-width=".800" opacity=".8"/><path d="M9.90 10.45L12.43 4.47" stroke="#3e3e3e" stroke-width=".800" opacity=".8"/><path d="M5.90 10.45L9.56 15.18" stroke="#3e3e3e" stroke-width=".800" opacity=".8"/></svg><span class="nm" id="l3" style="letter-spacing:-0.318px">GIẢI VÔ ĐỊCH TÂY ÚC</span><i class="vd" style="left:419px"></i><i class="vd" style="left:735px"></i><span class="ct" style="left:527px">Toàn Trận</span><span class="ct" style="left:842px">Hiệp 1</span></div>
<div class="mb" style="top:759.300px"><div class="tr"><svg class="star" style="left:6.500px;top:4.300px" viewBox="0 0 16 16"><path d="M8 1.300 10 5.900 15 6.400 11.200 9.700 12.300 14.600 8 12 3.700 14.600 4.800 9.700 1 6.400 6 5.900z" fill="none" stroke="#6e6e6e" stroke-width="1.200" stroke-linejoin="round"/></svg><span class="bd">1H 46'</span><i class="vd" style="left:419px"></i><i class="vd" style="left:735px"></i><span class="ch" style="left:422.6px">Đội nhà</span><span class="ch" style="left:526.5px">Hòa</span><span class="ch" style="left:630.4px">Đội khách</span><span class="ch" style="left:735.2px">Đội nhà</span><span class="ch" style="left:839px">Hòa</span><span class="ch" style="left:942.5px">Đội khách</span></div><svg class="star" style="left:6.500px;top:34.500px" viewBox="0 0 16 16"><path d="M8 1.300 10 5.900 15 6.400 11.200 9.700 12.300 14.600 8 12 3.700 14.600 4.800 9.700 1 6.400 6 5.900z" fill="none" stroke="#4e4e4e" stroke-width="1.200" stroke-linejoin="round"/></svg><svg class="star" style="left:6.500px;top:64.500px" viewBox="0 0 16 16"><path d="M8 1.300 10 5.900 15 6.400 11.200 9.700 12.300 14.600 8 12 3.700 14.600 4.800 9.700 1 6.400 6 5.900z" fill="none" stroke="#4e4e4e" stroke-width="1.200" stroke-linejoin="round"/></svg><span class="tn" id="m4a" style="letter-spacing:-0.176px;top:37px">Bayswater City</span><span class="tn" id="m4b" style="letter-spacing:0.054px;top:67px">Perth Glory (Trẻ)</span><span class="sc" style="top:40px">2</span><span class="sc" style="top:70px">0</span><div class="oc" style="left:426px">1.02</div><div class="oc" style="left:529px">9.30<i class="up"></i></div><div class="oc" style="left:632px;width:96px">100.00</div><i class="v1"></i><i class="v2"></i><i class="hl"></i><div class="ib" style="left:8px"><svg class="abs" style="left:3.500px;top:3.500px" width="13" height="13" viewBox="0 0 13 13"><g fill="none" stroke="#3f98e4" stroke-width="1.300" stroke-linejoin="round"><path d="M1.500 1H12L11 4.600 12 8.500 11 12.100H.8L1.800 8.500 .8 4.600z"/><path d="M.8 4.600H11M1.800 8.500H12" stroke-width="1.500"/></g></svg></div><div class="ib" style="left:36px"><svg class="abs" style="left:3.500px;top:3.500px" width="13" height="13" viewBox="0 0 13 13"><g fill="#42a0e6"><rect x=".5" y="6.300" width="2.700" height="5.300" rx=".6"/><rect x="4.600" y="1.100" width="2.700" height="10.500" rx=".6"/><rect x="8.700" y="3.700" width="2.700" height="7.900" rx=".6"/></g></svg></div></div>
<div class="lrow" style="top:884px"><svg class="abs" style="left:6.500px;top:10px" width="12" height="8" viewBox="0 0 13 8"><path d="M1 1 6.500 6.500 12 1" fill="none" stroke="#fff" stroke-width="1.700" stroke-linecap="round" stroke-linejoin="round"/></svg><i class="vd" style="left:23px;background:#4c4c4c"></i><svg class="star" style="left:30.300px;top:5.300px" viewBox="0 0 16 16"><path d="M8 1.300 10 5.900 15 6.400 11.200 9.700 12.300 14.600 8 12 3.700 14.600 4.800 9.700 1 6.400 6 5.900z" fill="none" stroke="#6a6a6a" stroke-width="1.200" stroke-linejoin="round"/></svg><svg class="abs" style="left:53px;top:4px" width="18" height="20" viewBox="0 0 18 20"><circle cx="9" cy="9.3" r="5" fill="#128a38"/><path d="M9.00 7.80L10.56 10.50L7.44 10.50z" fill="#3e3e3e"/><path d="M9.00 7.80L4.17 8.01" stroke="#3e3e3e" stroke-width=".800" opacity=".8"/><path d="M10.56 10.50L12.54 5.76" stroke="#3e3e3e" stroke-width=".800" opacity=".8"/><path d="M7.44 10.50L10.29 14.13" stroke="#3e3e3e" stroke-width=".800" opacity=".8"/><rect x="3" y="15.300" width="12" height="1.600" fill="#128a38" opacity=".8"/><rect x="5" y="17.500" width="8" height="1" fill="#128a38" opacity=".6"/><rect x="1" y="16" width="16" height=".8" fill="#128a38" opacity=".6"/></svg><span class="nm" id="l4" style="letter-spacing:-0.068px">GIẢI VÔ ĐỊCH TASMANIA ÚC</span><i class="vd" style="left:419px"></i><i class="vd" style="left:735px"></i><span class="ct" style="left:527px">Toàn Trận</span><span class="ct" style="left:842px">Hiệp 1</span></div>
<div class="mb" style="top:912.400px"><div class="tr"><svg class="star" style="left:6.500px;top:4.300px" viewBox="0 0 16 16"><path d="M8 1.300 10 5.900 15 6.400 11.200 9.700 12.300 14.600 8 12 3.700 14.600 4.800 9.700 1 6.400 6 5.900z" fill="none" stroke="#6e6e6e" stroke-width="1.200" stroke-linejoin="round"/></svg><span class="bd">2H 35'</span><i class="vd" style="left:419px"></i><i class="vd" style="left:735px"></i><span class="ch" style="left:422.6px">Đội nhà</span><span class="ch" style="left:526.5px">Hòa</span><span class="ch" style="left:630.4px">Đội khách</span><span class="ch" style="left:735.2px">Đội nhà</span><span class="ch" style="left:839px">Hòa</span><span class="ch" style="left:942.5px">Đội khách</span></div><svg class="star" style="left:6.500px;top:34.500px" viewBox="0 0 16 16"><path d="M8 1.300 10 5.900 15 6.400 11.200 9.700 12.300 14.600 8 12 3.700 14.600 4.800 9.700 1 6.400 6 5.900z" fill="none" stroke="#4e4e4e" stroke-width="1.200" stroke-linejoin="round"/></svg><svg class="star" style="left:6.500px;top:64.500px" viewBox="0 0 16 16"><path d="M8 1.300 10 5.900 15 6.400 11.200 9.700 12.300 14.600 8 12 3.700 14.600 4.800 9.700 1 6.400 6 5.900z" fill="none" stroke="#4e4e4e" stroke-width="1.200" stroke-linejoin="round"/></svg><span class="tn" id="m5a" style="top:37px"></span><span class="tn" id="m5b" style="top:67px"></span><span class="sc" style="top:40px"></span><span class="sc" style="top:70px"></span><i class="v1"></i><i class="v2"></i><i class="hl"></i><div class="ib" style="left:8px"><svg class="abs" style="left:3.500px;top:3.500px" width="13" height="13" viewBox="0 0 13 13"><g fill="none" stroke="#3f98e4" stroke-width="1.300" stroke-linejoin="round"><path d="M1.500 1H12L11 4.600 12 8.500 11 12.100H.8L1.800 8.500 .8 4.600z"/><path d="M.8 4.600H11M1.800 8.500H12" stroke-width="1.500"/></g></svg></div><div class="ib" style="left:36px"><svg class="abs" style="left:3.500px;top:3.500px" width="13" height="13" viewBox="0 0 13 13"><g fill="#42a0e6"><rect x=".5" y="6.300" width="2.700" height="5.300" rx=".6"/><rect x="4.600" y="1.100" width="2.700" height="10.500" rx=".6"/><rect x="8.700" y="3.700" width="2.700" height="7.900" rx=".6"/></g></svg></div></div>
<!-- RIGHT PANEL -->
<div class="abs" style="left:1111px;top:54px;width:8px;height:23px;background:#2f6ca6;border-radius:3px 0 0 3px">
  <i class="abs" style="left:2px;top:7.500px;width:5px;height:1.500px;background:#fff"></i><i class="abs" style="left:2px;top:10.500px;width:5px;height:1.500px;background:#fff"></i><i class="abs" style="left:2px;top:13.500px;width:5px;height:1.500px;background:#fff"></i>
</div>
<div class="abs" id="rp" style="left:1119px;top:49.500px;width:226px;height:128.500px;background:#1b1b1b;border-radius:3px">
  <svg class="abs" style="left:4px;top:3.500px" width="218" height="54" viewBox="0 0 218 54">
<defs><linearGradient id="b1" x1="0" y1="0" x2="0" y2="1"><stop offset="0" stop-color="#2447a6"/><stop offset=".22" stop-color="#4a6cc0"/><stop offset=".45" stop-color="#7f97d2"/><stop offset=".62" stop-color="#6f86bd"/><stop offset=".78" stop-color="#5f7aa0"/><stop offset=".88" stop-color="#6fa548"/><stop offset="1" stop-color="#86c23a"/></linearGradient><radialGradient id="b1r" cx=".97" cy=".3" r=".33"><stop offset="0" stop-color="#3b82e6"/><stop offset=".35" stop-color="#2458c2" stop-opacity=".95"/><stop offset="1" stop-color="#1f48a8" stop-opacity="0"/></radialGradient><radialGradient id="b1d" cx=".75" cy=".72" r=".3"><stop offset="0" stop-color="#3a4f8c" stop-opacity=".75"/><stop offset="1" stop-color="#3a4f8c" stop-opacity="0"/></radialGradient><radialGradient id="fire" cx=".5" cy=".5" r=".5"><stop offset="0" stop-color="#ffe9a0"/><stop offset=".45" stop-color="#f59a1e"/><stop offset=".8" stop-color="#e0661a" stop-opacity=".8"/><stop offset="1" stop-color="#c8400c" stop-opacity="0"/></radialGradient><linearGradient id="scr" x1="0" y1="0" x2="0" y2="1"><stop offset="0" stop-color="#6f86c4"/><stop offset=".55" stop-color="#9aa9cf"/><stop offset=".6" stop-color="#a6cf4e"/><stop offset="1" stop-color="#5aa02c"/></linearGradient><clipPath id="bc1"><rect width="218" height="54" rx="3"/></clipPath><filter id="gl1" x="-10%" y="-30%" width="120%" height="160%"><feGaussianBlur stdDeviation="1.500"/></filter><filter id="bl2" x="-20%" y="-20%" width="140%" height="140%"><feGaussianBlur stdDeviation=".7"/></filter></defs>
<g clip-path="url(#bc1)"><rect width="218" height="54" fill="url(#b1)"/><rect width="218" height="54" fill="url(#b1r)"/><rect width="218" height="54" fill="url(#b1d)"/><path d="M0 0H60V10L0 30z" fill="#2d52b0" opacity=".7"/><path d="M0 40Q20 36 40 40V54H0z" fill="#4f9a2c"/><g filter="url(#bl2)" opacity=".5"><path d="M100 20 150 0h12L110 26z" fill="#b8c8ee"/><path d="M140 30 190 6h8L150 36z" fill="#a8bcea"/></g><path d="M20.3 15.4 L52.7 3.3 L64.8 20.7 L81 54.7 L34.9 54.7 L34.9 49z" fill="#1c2230"/><path d="M22.7 16.2 L51.9 5.7 L63.2 21.5 L77.8 53.1 L37.3 49z" fill="url(#scr)"/><path d="M38.9 49 L53.5 45.8 L77.8 42.5 L80.2 53.9 L35.7 53.9z" fill="#e9eef6"/><g opacity=".75" filter="url(#bl2)"><path d="M8.1 33.6 L13.8 32.8 L15.8 40.9 L14.2 45.8 L8.9 45.8 L6.9 40.1z" fill="#d6def2"/><path d="M8.9 45.8 L14.2 45.8 L13.8 52.3 L11.8 52.3 L11.4 48.2 L10.2 52.3 L8.1 52.3z" fill="#8fb0e0"/></g><circle cx="11" cy="31.6" r="2" fill="#b89a8a" opacity=".8"/><path d="M32.4 19.1 L37.3 19.9 L39.7 25.5 L37.3 28.8 L33.2 25.5 L29.2 27.2 L28.8 25.5 L32.4 23.1z" fill="#f0ede8"/><path d="M34.9 25.5 L39.7 25.1 L40.9 29.6 L36.5 30.4z" fill="#d8402a"/><path d="M37.3 29.6 L40.5 29.2 L42.1 39.3 L40.5 39.7z" fill="#e8e0d8"/><circle cx="33.9" cy="16.5" r="1.700" fill="#6a4030"/><path d="M40.9 23.9 L44.6 20.7 L45.4 22.3 L42.1 25.5z" fill="#8a8f98"/><ellipse cx="56.3" cy="12.2" rx="10" ry="9" fill="url(#fire)"/><path d="M48.6 15.8 L44.6 19.9 L48.6 19.1 L47 23.1 L53.5 19.1z" fill="#f08a20" opacity=".8"/><circle cx="56.3" cy="12.6" r="3.600" fill="#f6f2ea"/><circle cx="57.1" cy="11.8" r="1.400" fill="#2a2a2a"/><path d="M43 45 L48.6 32.8 L55.9 23.1 L69.7 11 L72.9 13.4 L64 23.9 L68.1 29.6 L77.8 19.9 L80.2 22.3 L71.3 34.4 L66.4 37.7 L58.3 46.6 L48.6 49z" fill="#0f8c6c"/><path d="M48.6 32.8 L53.5 28 L64 37.7 L58.3 46.6 L52.7 42.5z" fill="#0a6a52"/><path d="M48.6 32.8 L50.2 31.2 L64.8 39.3 L63.2 41.3z" fill="#e6f2ec"/><ellipse cx="64.4" cy="30.4" rx="4.300" ry="4.600" fill="#1a1512"/><path d="M72.1 8.5 L74.5 4.5 L80.2 4.5 L78.6 10.2 L74.5 12.2z" fill="#f4f4f4"/><path d="M78.6 16.6 L82.6 10.2 L85.5 11.4 L82.6 18.3 L80.2 20.7z" fill="#f4f4f4"/><path d="M70.1 11 L72.5 8.9 L75.7 12.2 L73.3 13.8z" fill="#1a1a1a"/><path d="M38.9 49 L43.4 44.6 L48.6 49 L45.4 53.9 L38.9 53.9z" fill="#f2f2f2"/><path d="M72.1 33.6 L77.8 34.4 L88.3 40.9 L98.8 53.9 L81 53.9 L74.5 40.9z" fill="#8a5a4a"/><path d="M23.5 45 L27.6 43.4 L31.6 45.8 L32.4 49 L24.3 49z" fill="#5a3328" opacity=".9"/><path d="M2.5 23.9 Q0 42.5 23.5 50.6 T77.8 42.5" fill="none" stroke="#cfe6ff" stroke-width="1.600" opacity=".85"/><path d="M27.6 53.1 Q53.5 52.3 76.2 44.2" fill="none" stroke="#4aa0e8" stroke-width="1.500" opacity=".9"/><path d="M0 26.3 Q8.9 19.9 20.3 16.6" fill="none" stroke="#bcd8f8" stroke-width="1.200" opacity=".8"/><path d="M0 15.8 L7.3 10.2 L34.9 0.4 L50.2 0.4 L30.8 9.3 L8.1 23.1 L1.7 20.7z" fill="#e60f1c"/><text x="0" y="0" transform="translate(18 13.4) rotate(-27)" font-size="9.500" font-weight="700" font-style="italic" fill="#fff" text-anchor="middle" font-family="Liberation Sans,sans-serif" id="bnew">NEW</text><g transform="translate(202.5 53.1) rotate(-52)"><rect x="0" y="-5" width="26" height="10" rx="2" fill="#5fae9a"/><g opacity=".9"><rect x="2" y="-4" width="4" height="3" fill="#e8b0d0"/><rect x="7" y="-4" width="4" height="3" fill="#9fe0c0"/><rect x="12" y="-4" width="4" height="3" fill="#f0e090"/><rect x="17" y="-4" width="4" height="3" fill="#a0c8f0"/><rect x="2" y="1" width="4" height="3" fill="#b0e8b0"/><rect x="7" y="1" width="4" height="3" fill="#f0c0c0"/><rect x="12" y="1" width="4" height="3" fill="#90d0d0"/><rect x="17" y="1" width="4" height="3" fill="#e0f0a0"/></g></g><ellipse cx="169.5" cy="50.5" rx="4" ry="3" fill="#d8e060" opacity=".6"/><g filter="url(#gl1)" fill="#d6e8ff" opacity=".8" font-family="Liberation Sans,sans-serif" font-weight="700" font-size="21.500" letter-spacing="-.35"><text x="92" y="22.200">Trải nghiệm</text><text x="92" y="45.900">tuyệt đỉnh</text></g><g fill="#fff" font-family="Liberation Sans,sans-serif" font-weight="700" font-size="21.500" letter-spacing="-.35"><text x="92" y="22.200" id="bn1">Trải nghiệm</text><text x="92" y="45.900" id="bn2">tuyệt đỉnh</text></g></g>
</svg>
  <svg class="abs" style="left:4px;top:63.500px" width="218" height="53" viewBox="0 0 218 53">
    <defs><clipPath id="bc2"><rect width="218" height="53" rx="3"/></clipPath></defs>
    <g clip-path="url(#bc2)">
      <rect width="218" height="53" fill="#4a8cc8"/>
      <path d="M10 14 58 0 218 0 218 8 150 53 60 53z" fill="#5f9bd2" opacity=".55"/>
      <path d="M12 12 56 0 66 18 36 36z" fill="#7eb0de" opacity=".6"/>
      <path d="M140 0 206 2 196 30 170 50 150 53 120 24z" fill="#6aa3d8" opacity=".6"/>
      <circle cx="46" cy="14" r="8" fill="none" stroke="#8dbbe6" stroke-width="4" opacity=".9"/>
      <path d="M12 14c0 8 6 12 16 12l-2-4c-8 0-13-3-14-8z" fill="#f0614a"/>
      <path d="M184 5c8 8 8 20-8 26l1 3c22-6 20-22 7-29z" fill="#f5c352"/>
      <circle cx="79" cy="18.500" r="10.700" fill="#f2f2f2"/>
      <g fill="#222"><path d="M79 13.500l5 3.500-2 5.500h-6l-2-5.500z"/><path d="M74 8.500l5 1.500 5-1.500a10.500 10.500 0 0 0-10 0z"/><path d="M68.500 17l3-4 1.500 4.500-3.500 4z"/><path d="M89.500 17l-3-4-1.500 4.500 3.500 4z"/><path d="M73 27.500l.5-4.500 4.500.5 1.500 5z"/><path d="M85 27.500l-.5-4.500-4.500.5-1.500 5z"/></g>
      <path d="M36 39 64 40 64 50 40 45z" fill="#fff"/>
      <path d="M31 33c2 2 4 5 5 9l-3 .5c-1.500-3-2-6-2-9.500z" fill="#111"/>
      <path d="M64 40 72 40 72 51 64 50z" fill="#c01218"/>
      <path d="M72 40 100 41 104 53 72 51z" fill="#e9a35e"/>
      <path d="M98 41c12 0 24 2 36 8v4h-34z" fill="#d8121a"/>
      <path d="M126 52 134 20 128 12 138 8 152 14 150 30 138 53z" fill="#e01018"/>
      <path d="M150 14 158 22 150 30z" fill="#e01018"/><path d="M152 26 157 22 159 27 154 30z" fill="#fff"/>
      <path d="M154 28c6 6 10 14 14 25h-6c-3-9-7-16-12-22z" fill="#e9a35e"/>
      <path d="M120 30 128 26 130 30 122 36 117 34z" fill="#e9a35e"/>
      <circle cx="125.500" cy="6.500" r="5.500" fill="#e9a35e"/>
      <path d="M119.500 5c1-5 8-6 12-2l-2 2c-3-1-6 0-8 2z" fill="#1a1411"/>
      <circle cx="132" cy="20" r="2.300" fill="#fff"/>
      <path d="M132 48 142 28" stroke="#fff" stroke-width="1.200"/>
    </g>
  </svg>
  <i class="abs" style="left:101px;top:118px;width:8px;height:8px;border-radius:50%;background:#6a6a6a"></i>
  <i class="abs" style="left:117px;top:118px;width:8px;height:8px;border-radius:50%;background:#c6e0fb"></i>
</div>


</div>
</body>
</html>
